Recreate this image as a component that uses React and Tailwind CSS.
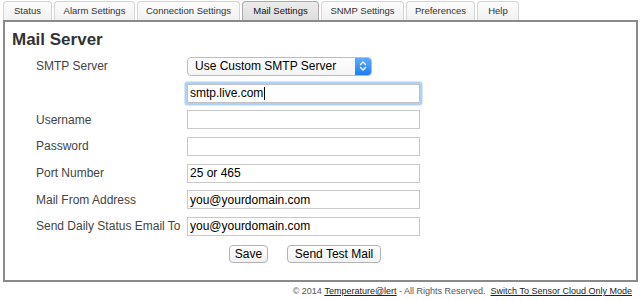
import React from 'react';

const TABS = [
  { label: 'Status', w: 'w-[49px]' },
  { label: 'Alarm Settings', w: 'w-[81px]' },
  { label: 'Connection Settings', w: 'w-[103px]' },
  { label: 'Mail Settings', w: 'w-[77px]', active: true },
  { label: 'SNMP Settings', w: 'w-[83px]' },
  { label: 'Preferences', w: 'w-[69px]' },
  { label: 'Help', w: 'w-[42px]' },
];

const Field = ({ value }) => (
  <div className="w-[233px] h-[19px] shrink-0 border border-[#c9c9c9] bg-white flex items-center pl-[2px] text-[12px] text-black">
    {value}
  </div>
);

const Row = ({ label, children }) => (
  <div className="flex items-center h-[26.7px]">
    <div className="w-[182px] shrink-0 pl-[31px] text-[12px] text-[#444] whitespace-nowrap">{label}</div>
    {children}
  </div>
);

export default function App() {
  return (
    <div className="w-[642px] h-[300px] bg-white overflow-hidden font-['Liberation_Sans',Arial,sans-serif]">
      {/* tabs */}
      <div className="flex items-end gap-[2px] pl-[3px] h-[20px]">
        {TABS.map(t => (
          <div
            key={t.label}
            className={
              t.active
                ? `${t.w} h-[19px] flex items-center justify-center rounded-t-[4px] border border-b-0 border-[#a9a9a9] bg-gradient-to-b from-[#ececec] to-[#dedede] text-[9.5px] text-[#111]`
                : `${t.w} h-[19px] flex items-center justify-center rounded-t-[4px] border border-b-0 border-[#d4d4d4] bg-gradient-to-b from-[#fcfcfc] to-[#f1f1f1] text-[9.5px] text-[#333]`
            }
          >
            {t.label}
          </div>
        ))}
      </div>

      {/* panel */}
      <div className="ml-[3px] w-[635px] h-[262px] border-2 border-[#8a8a8a]">
        <div className="pl-[7px] pt-[8px] text-[17px] leading-[20px] font-bold text-[#333]">Mail Server</div>

        <div className="mt-[3px]">
          <Row label="SMTP Server">
            <div className="w-[185px] h-[19px] shrink-0 flex rounded-[4px] border border-[#bdbdbd] bg-gradient-to-b from-white to-[#f4f4f4] overflow-hidden">
              <div className="flex-1 flex items-center pl-[7px] text-[12px] text-black">Use Custom SMTP Server</div>
              <div className="w-[16px] bg-gradient-to-b from-[#5eaaff] to-[#1c7ff5] flex items-center justify-center">
                <svg width="8" height="12" viewBox="0 0 8 12" fill="none" stroke="white" strokeWidth="1.4" strokeLinecap="round" strokeLinejoin="round">
                  <path d="M1.5 4.5 L4 2 L6.5 4.5" />
                  <path d="M1.5 7.5 L4 10 L6.5 7.5" />
                </svg>
              </div>
            </div>
          </Row>
          <Row label="">
            <div className="w-[233px] h-[19px] shrink-0 border border-[#c0c0c0] bg-white flex items-center pl-[2px] text-[12px] text-black rounded-[1px] shadow-[0_0_0_2.5px_#aed2f6]">
              smtp.live.com<span className="inline-block w-[1px] h-[13px] bg-black ml-[1px]" />
            </div>
          </Row>
          <Row label="Username"><Field value="" /></Row>
          <Row label="Password"><Field value="" /></Row>
          <Row label="Port Number"><Field value="25 or 465" /></Row>
          <Row label="Mail From Address"><Field value="you@yourdomain.com" /></Row>
          <Row label="Send Daily Status Email To"><Field value="you@yourdomain.com" /></Row>
        </div>

        <div className="flex gap-[19px] pl-[224px] mt-[5px]">
          <button className="w-[39px] h-[18px] rounded-[4px] border border-[#b3b3b3] bg-gradient-to-b from-white to-[#f1f1f1] text-[12px] text-black flex items-center justify-center">Save</button>
          <button className="w-[94px] h-[18px] rounded-[4px] border border-[#b3b3b3] bg-gradient-to-b from-white to-[#f1f1f1] text-[12px] text-black flex items-center justify-center">Send Test Mail</button>
        </div>
      </div>

      {/* footer */}
      <div className="flex justify-end pr-[10px] pt-[3px] text-[9px] text-[#555] whitespace-pre">
        <span>© 2014 </span>
        <span className="underline text-[#222]">Temperature@lert</span>
        <span> - All Rights Reserved.  </span>
        <span className="underline text-[#222]">Switch To Sensor Cloud Only Mode</span>
      </div>
    </div>
  );
}
